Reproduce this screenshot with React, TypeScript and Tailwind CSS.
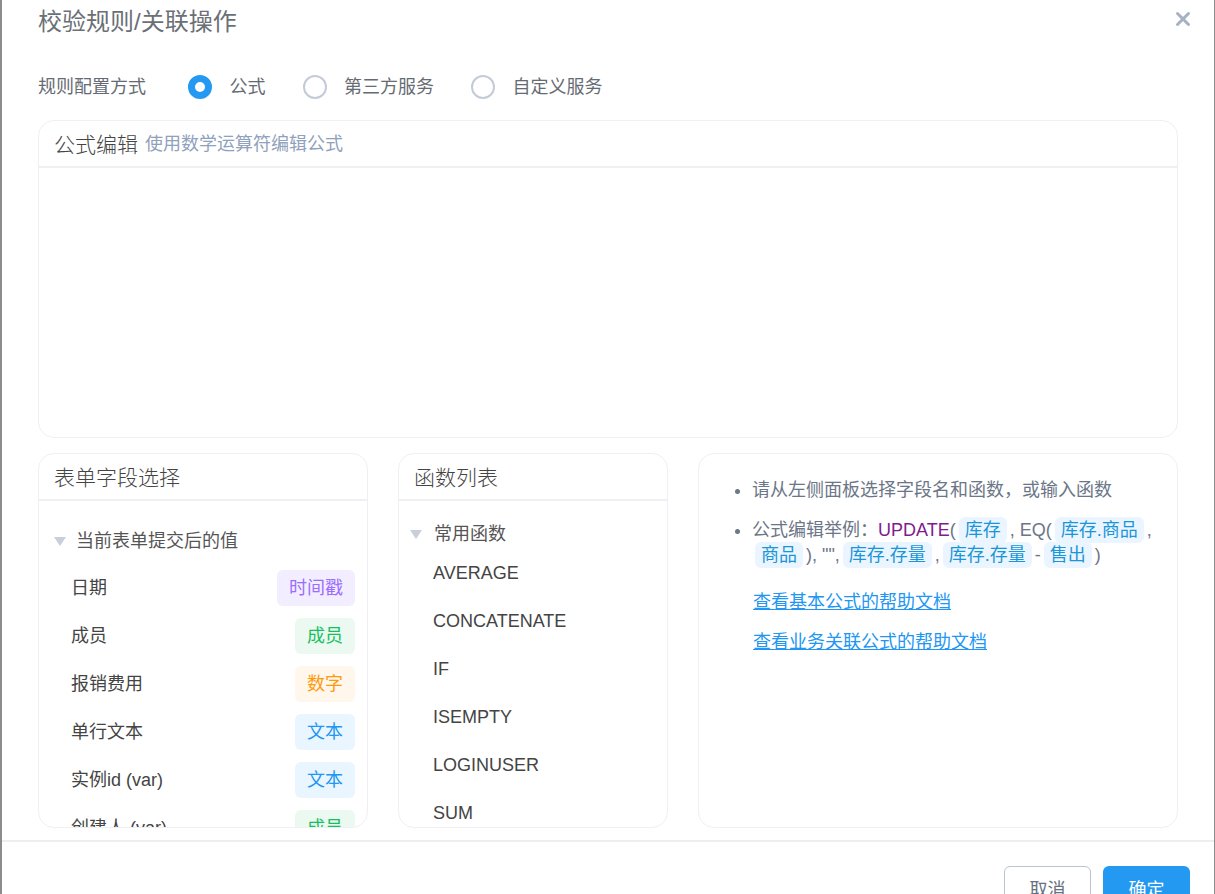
import { X } from "lucide-react";

const FONT = "font-['Liberation_Sans','Noto_Sans_CJK_SC',sans-serif]";

const fields = [
  { name: "日期", type: "时间戳", cls: "bg-[#f3eeff] text-[#9b6dff]" },
  { name: "成员", type: "成员", cls: "bg-[#ebf9f1] text-[#16c060]" },
  { name: "报销费用", type: "数字", cls: "bg-[#fff7eb] text-[#ff9a0d]" },
  { name: "单行文本", type: "文本", cls: "bg-[#e9f5ff] text-[#2196f3]" },
  { name: "实例id (var)", type: "文本", cls: "bg-[#e9f5ff] text-[#2196f3]" },
  { name: "创建人 (var)", type: "成员", cls: "bg-[#ebf9f1] text-[#16c060]" },
];

const functions = ["AVERAGE", "CONCATENATE", "IF", "ISEMPTY", "LOGINUSER", "SUM"];

const Radio = ({ label, checked }: { label: string; checked?: boolean }) => (
  <div className="flex items-center gap-[17.5px]">
    {checked ? (
      <span className="h-6 w-6 rounded-full border-[7px] border-[#2499f2] bg-white" />
    ) : (
      <span className="h-6 w-6 rounded-full border-2 border-[#c3cbd9] bg-white" />
    )}
    <span className="text-[18px] leading-6 text-[#666b73]">{label}</span>
  </div>
);

const Triangle = () => (
  <svg width="12" height="9" viewBox="0 0 12 9" className="shrink-0">
    <path d="M0 0h12L6 9z" fill="#c8cedb" />
  </svg>
);

const Chip = ({ children, first }: { children: string; first?: boolean }) => (
  <span className={`rounded-md bg-[#ebf5ff] px-[6px] py-[3px] text-[#1a95d8] ${first ? "ml-[3px] mr-[-2px]" : "mx-[-2px]"}`}>
    {children}
  </span>
);

const PanelHeader = ({ children }: { children: React.ReactNode }) => (
  <div className="flex h-[47px] shrink-0 items-center border-b-2 border-[#eef0f3] pl-[15px] pt-[2px] text-[21px] font-light text-[#444]">
    {children}
  </div>
);

export default function App() {
  return (
    <div className={`flex h-[894px] w-full overflow-hidden bg-white ${FONT}`}>
      <div className="w-[2px] shrink-0 bg-[#8c8c8c]" />
      <div className="flex min-w-0 flex-1 flex-col">
        <div className="flex h-[44px] shrink-0 items-center justify-between pl-9 pr-5">
          <h1 className="text-[24px] leading-8 text-[#6b6f76]">校验规则/关联操作</h1>
          <X size={22} strokeWidth={3.2} className="-mt-[6px] text-[#a6b1c2]" />
        </div>

        <div className="flex h-[76px] shrink-0 items-center pl-9 pt-[10px]">
          <span className="w-[150px] text-[18px] leading-6 text-[#666b73]">规则配置方式</span>
          <div className="flex gap-[37px]">
            <Radio label="公式" checked />
            <Radio label="第三方服务" />
            <Radio label="自定义服务" />
          </div>
        </div>

        <div className="mx-9 h-[318px] shrink-0 rounded-2xl border border-[#eef0f3]">
          <PanelHeader>
            公式编辑
            <span className="ml-[7px] text-[18px] font-normal text-[#8fa1bb]">使用数学运算符编辑公式</span>
          </PanelHeader>
        </div>

        <div className="mx-9 mt-[15px] flex h-[375px] shrink-0 gap-[30px]">
          <div className="flex w-[330px] shrink-0 flex-col overflow-hidden rounded-2xl border border-[#eef0f3]">
            <PanelHeader>表单字段选择</PanelHeader>
            <div className="flex h-[63px] shrink-0 items-center gap-[10px] pl-[15px] pt-[17px] text-[18px] text-[#555]">
              <Triangle />
              当前表单提交后的值
            </div>
            {fields.map((f) => (
              <div key={f.name + f.type} className="flex h-[48px] shrink-0 items-center justify-between pl-8 pr-3 text-[18px] text-[#444]">
                <span>{f.name}</span>
                <span className={`flex h-9 items-center rounded-md px-3 ${f.cls}`}>{f.type}</span>
              </div>
            ))}
          </div>

          <div className="flex w-[270px] shrink-0 flex-col overflow-hidden rounded-2xl border border-[#eef0f3]">
            <PanelHeader>函数列表</PanelHeader>
            <div className="flex h-[48px] shrink-0 items-center gap-3 pl-[11px] pt-[18px] text-[18px] text-[#555]">
              <Triangle />
              常用函数
            </div>
            {functions.map((f) => (
              <div key={f} className="flex h-[48px] shrink-0 items-center pl-[34px] text-[18px] text-[#444]">
                {f}
              </div>
            ))}
          </div>

          <div className="flex-1 rounded-2xl border border-[#eef0f3] pl-[53px] pr-5 pt-[24px] text-[18px] leading-[25px] text-[#6b7687]">
            <ul className="list-disc">
              <li>请从左侧面板选择字段名和函数，或输入函数</li>
              <li className="mt-[15px]">
                公式编辑举例：<span className="text-[#801a8e]">UPDATE</span>( <Chip>库存</Chip> , EQ( <Chip>库存.商品</Chip> ,
                <br />
                <Chip first>商品</Chip> ), "", <Chip>库存.存量</Chip> , <Chip>库存.存量</Chip> - <Chip>售出</Chip> )
              </li>
            </ul>
            <div className="ml-px mt-[22px] flex flex-col items-start gap-[15px] text-[#2196f3] underline">
              <a href="#">查看基本公式的帮助文档</a>
              <a href="#">查看业务关联公式的帮助文档</a>
            </div>
          </div>
        </div>

        <div className="mt-3 flex flex-1 justify-end gap-3 border-t-2 border-[#eceef2] pr-6 pt-6">
          <button className="h-[48px] w-[87px] rounded-md border border-[#bcc4d0] bg-white text-[18px] text-[#66707f]">取消</button>
          <button className="h-[48px] w-[87px] rounded-md bg-[#2499f2] text-[18px] text-white">确定</button>
        </div>
      </div>
      <div className="w-[1px] shrink-0 bg-[#8c8c8c]" />
    </div>
  );
}
